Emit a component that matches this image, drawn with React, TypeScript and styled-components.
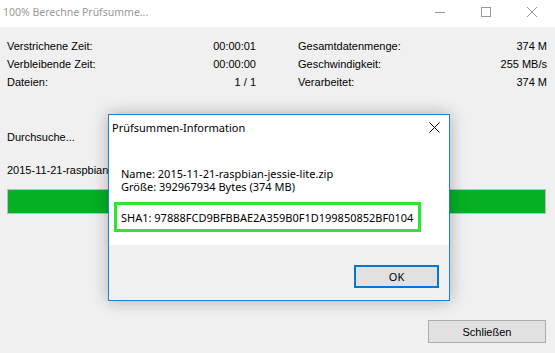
import React from 'react'
import styled, { createGlobalStyle } from 'styled-components'

const GlobalStyle = createGlobalStyle`
  html, body {
    margin: 0;
    padding: 0;
    background: #f0f0f0;
  }
  * {
    box-sizing: border-box;
  }
`

const Window = styled.div`
  position: relative;
  width: 555px;
  height: 353px;
  overflow: hidden;
  background: #f0f0f0;
  font-family: "Liberation Sans", Arial, sans-serif;
  font-size: 11px;
  color: #000;
  display: flex;
  flex-direction: column;
`

const TitleBar = styled.div`
  height: 27px;
  background: #fff;
  display: flex;
  align-items: center;
  padding-left: 3px;
  flex-shrink: 0;
`

const TitleText = styled.div`
  flex: 1;
  font-family: "Noto Sans", "Open Sans", sans-serif;
  font-size: 10.5px;
  color: #999;
  margin-top: -3px;
`

const CaptionButton = styled.div`
  width: 46px;
  height: 27px;
  display: flex;
  align-items: center;
  justify-content: center;
  margin-top: -3px;
`

const Body = styled.div`
  flex: 1;
  display: flex;
  flex-direction: column;
  padding: 10px 9px 0 7px;
`

const StatsGrid = styled.div`
  display: grid;
  grid-template-columns: 249px 249px;
  column-gap: 42px;
`

const StatColumn = styled.div`
  display: flex;
  flex-direction: column;
`

const StatRow = styled.div`
  display: flex;
  justify-content: space-between;
  height: 18px;
  line-height: 18px;
`

const Label = styled.div<{ $top: number }>`
  margin-top: ${p => p.$top}px;
  line-height: 14px;
  white-space: nowrap;
`

const ProgressTrack = styled.div`
  margin-top: 12px;
  height: 25px;
  border: 1px solid #bcbcbc;
  background: #e6e6e6;
`

const ProgressFill = styled.div`
  height: 100%;
  background: #06b025;
`

const Footer = styled.div`
  display: flex;
  justify-content: flex-end;
  margin-top: 106px;
`

const WinButton = styled.button`
  width: 118px;
  height: 23px;
  border: 1px solid #adadad;
  background: #e1e1e1;
  font-family: "Liberation Sans", Arial, sans-serif;
  font-size: 11px;
  color: #000;
  padding: 0;
`

const Dialog = styled.div`
  position: absolute;
  left: 108px;
  top: 114px;
  width: 342px;
  height: 187px;
  border: 1px solid #1883d7;
  background: #fff;
  box-shadow: 0 0 16px rgba(0, 0, 0, 0.28);
  display: flex;
  flex-direction: column;
  font-family: "Noto Sans", "Open Sans", sans-serif;
  font-size: 11px;
  color: #000;
`

const DialogTitle = styled.div`
  height: 25px;
  display: flex;
  align-items: center;
  justify-content: space-between;
  padding: 0 9px 0 3px;
`

const DialogContent = styled.div`
  flex: 1;
  display: flex;
  flex-direction: column;
  padding: 27px 0 0 5px;
`

const InfoLine = styled.div`
  padding-left: 7px;
  line-height: 13px;
  white-space: nowrap;
`

const HashBox = styled.div`
  margin-top: 9px;
  width: 307px;
  height: 30px;
  border: 3px solid #2ee62e;
  display: flex;
  align-items: center;
  padding-left: 4px;
  white-space: nowrap;
`

const DialogFooter = styled.div`
  height: 55px;
  background: #f0f0f0;
  display: flex;
  justify-content: flex-end;
  align-items: flex-start;
  padding: 20px 10px 0 0;
`

const OkButton = styled.button`
  width: 85px;
  height: 23px;
  border: 2px solid #0078d7;
  background: #e1e1e1;
  font-family: "Noto Sans", "Open Sans", sans-serif;
  font-size: 11px;
  color: #000;
  padding: 0;
`

const leftStats = [
  ['Verstrichene Zeit:', '00:00:01'],
  ['Verbleibende Zeit:', '00:00:00'],
  ['Dateien:', '1 / 1'],
]

const rightStats = [
  ['Gesamtdatenmenge:', '374 M'],
  ['Geschwindigkeit:', '255 MB/s'],
  ['Verarbeitet:', '374 M'],
]

export default function App() {
  return (
    <>
      <GlobalStyle />
      <Window>
        <TitleBar>
          <TitleText>100% Berechne Prüfsumme...</TitleText>
          <CaptionButton>
            <svg width="10" height="10" viewBox="0 0 10 10">
              <path d="M0 5.5h10" stroke="#999" strokeWidth="1" />
            </svg>
          </CaptionButton>
          <CaptionButton>
            <svg width="10" height="10" viewBox="0 0 10 10">
              <rect x="0.5" y="0.5" width="9" height="9" fill="none" stroke="#999" />
            </svg>
          </CaptionButton>
          <CaptionButton>
            <svg width="10" height="10" viewBox="0 0 10 10">
              <path d="M0 0l10 10M10 0L0 10" stroke="#999" strokeWidth="1" />
            </svg>
          </CaptionButton>
        </TitleBar>

        <Body>
          <StatsGrid>
            <StatColumn>
              {leftStats.map(([k, v]) => (
                <StatRow key={k}>
                  <span>{k}</span>
                  <span>{v}</span>
                </StatRow>
              ))}
            </StatColumn>
            <StatColumn>
              {rightStats.map(([k, v]) => (
                <StatRow key={k}>
                  <span>{k}</span>
                  <span>{v}</span>
                </StatRow>
              ))}
            </StatColumn>
          </StatsGrid>

          <Label $top={39}>Durchsuche...</Label>
          <Label $top={19}>2015-11-21-raspbian-jessie-lite.zip</Label>

          <ProgressTrack>
            <ProgressFill style={{ width: '100%' }} />
          </ProgressTrack>

          <Footer>
            <WinButton>Schließen</WinButton>
          </Footer>
        </Body>

        <Dialog>
          <DialogTitle>
            <span>Prüfsummen-Information</span>
            <svg width="11" height="11" viewBox="0 0 11 11">
              <path d="M0.5 0.5l10 10M10.5 0.5L0.5 10.5" stroke="#000" strokeWidth="1" />
            </svg>
          </DialogTitle>
          <DialogContent>
            <InfoLine>Name: 2015-11-21-raspbian-jessie-lite.zip</InfoLine>
            <InfoLine>Größe: 392967934 Bytes (374 MB)</InfoLine>
            <HashBox>SHA1: 97888FCD9BFBBAE2A359B0F1D199850852BF0104</HashBox>
          </DialogContent>
          <DialogFooter>
            <OkButton>OK</OkButton>
          </DialogFooter>
        </Dialog>
      </Window>
    </>
  )
}
